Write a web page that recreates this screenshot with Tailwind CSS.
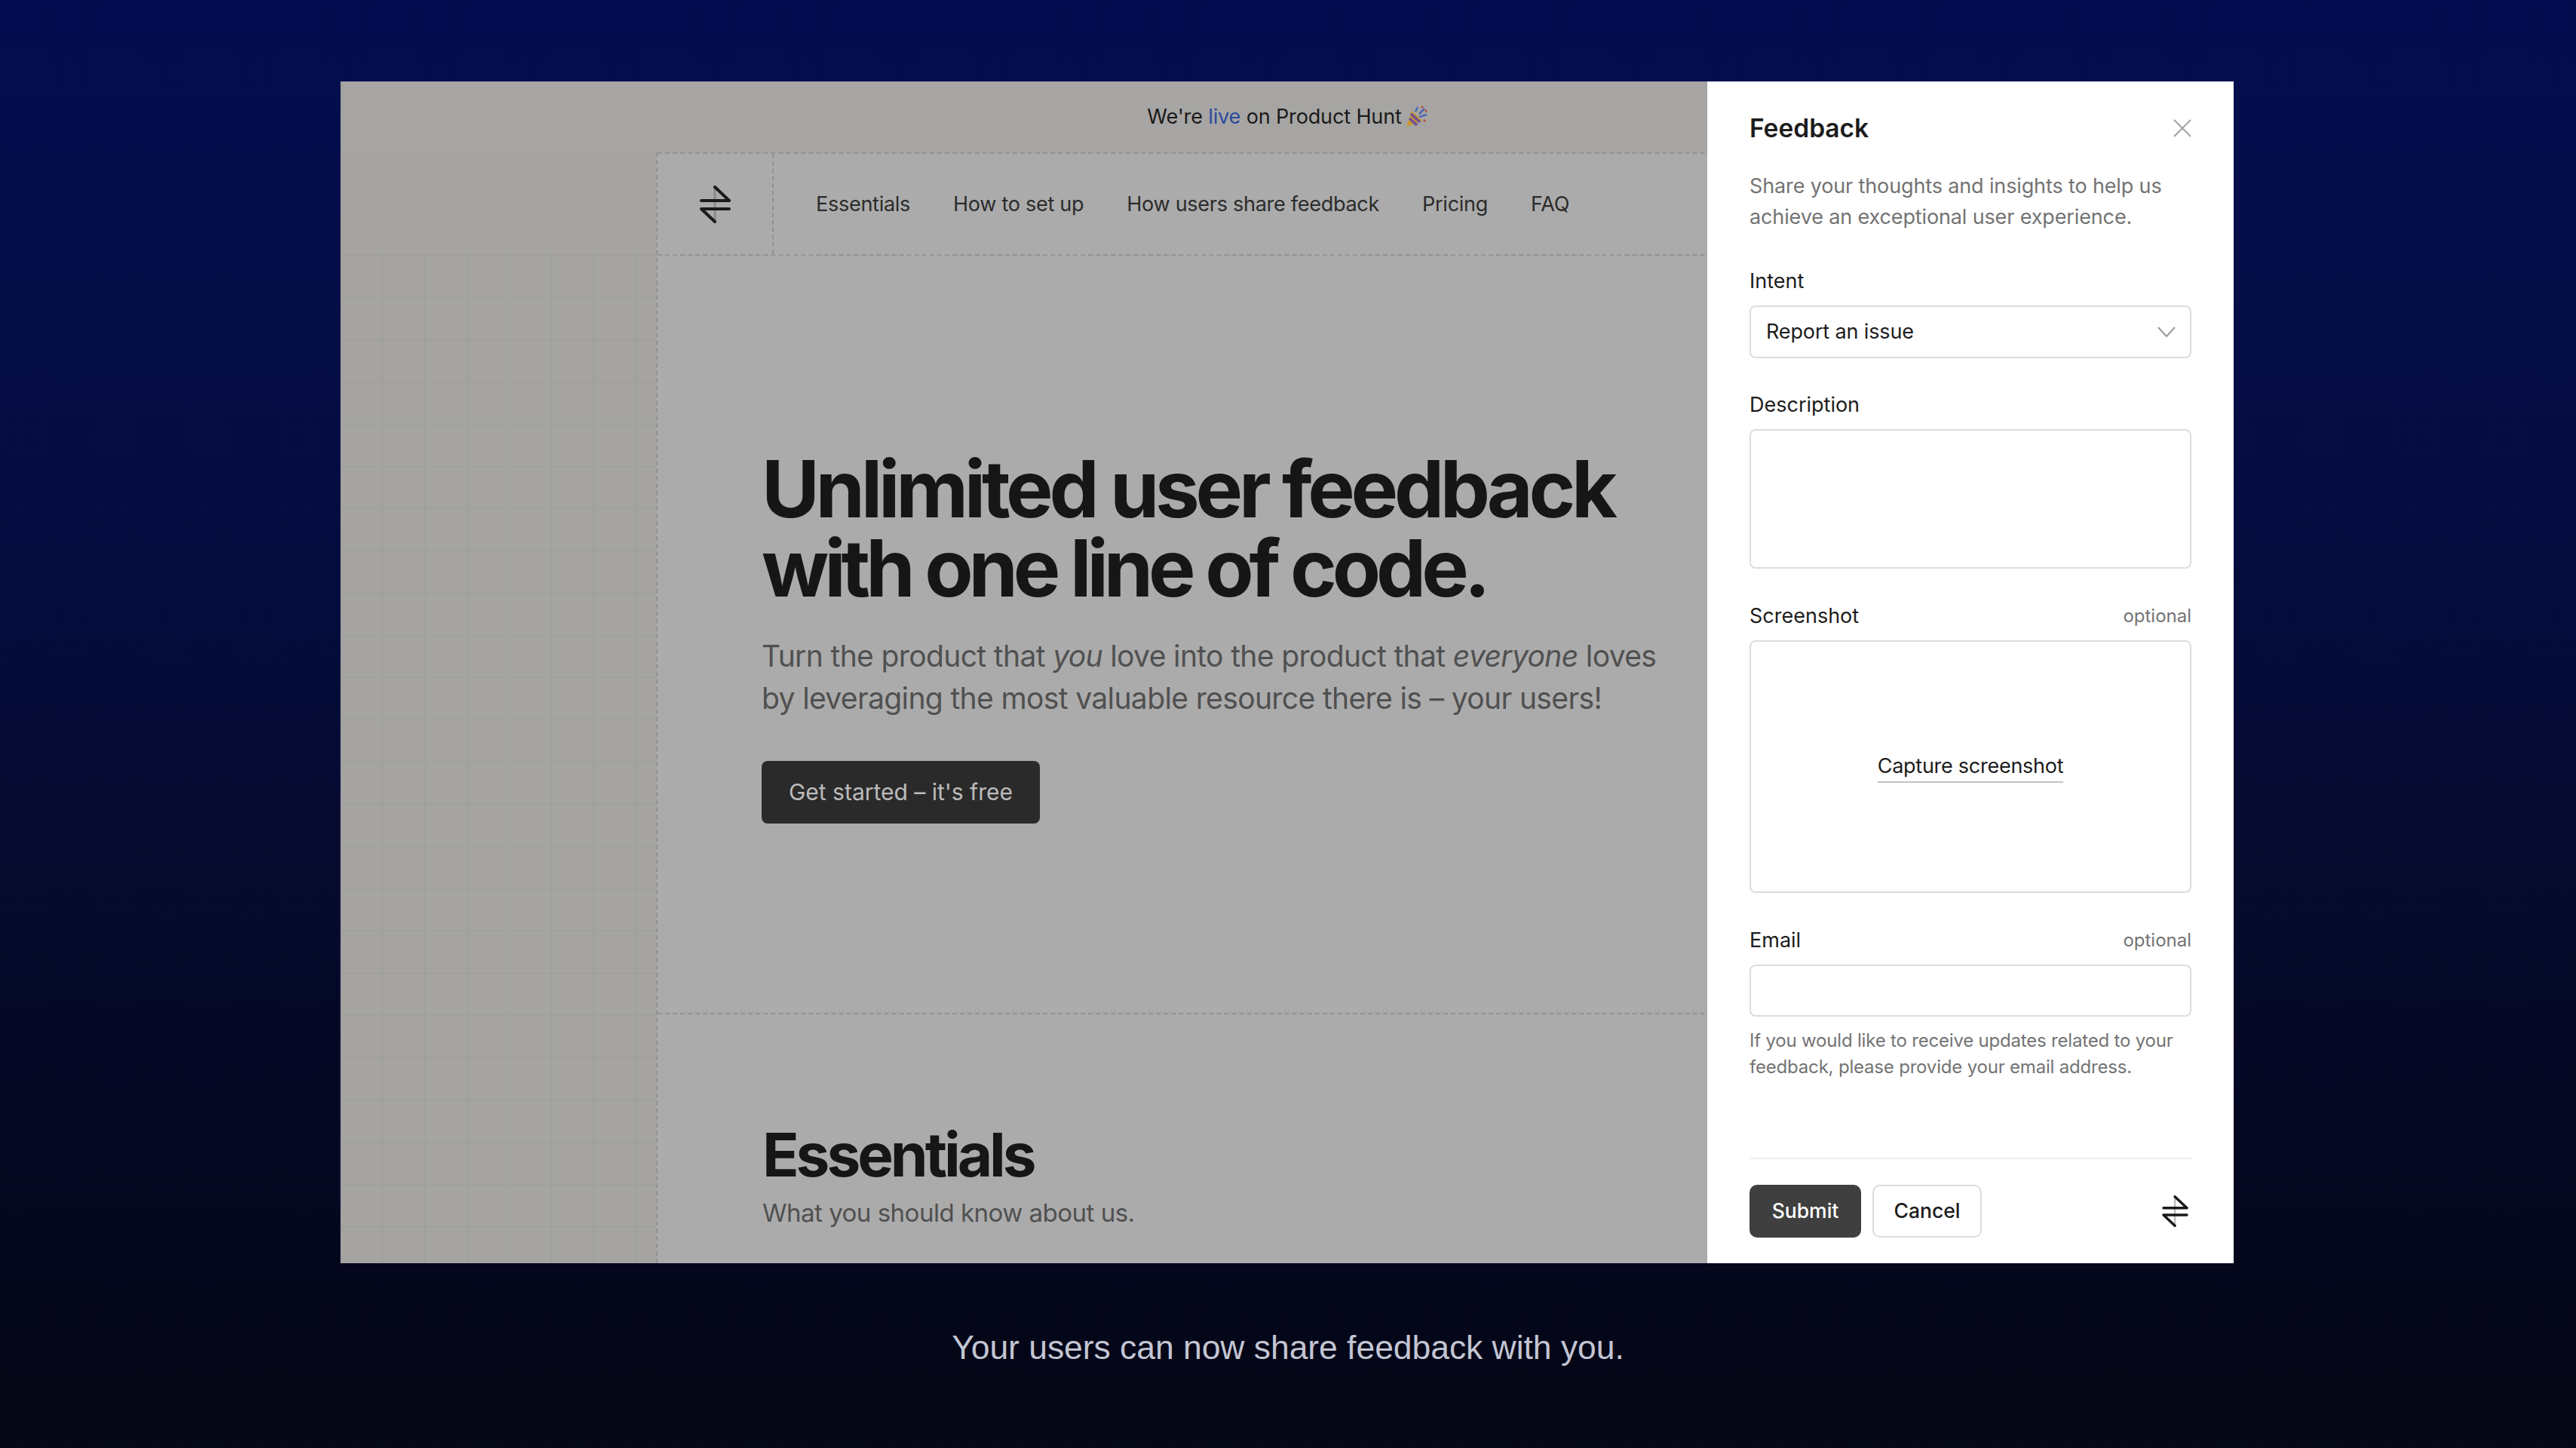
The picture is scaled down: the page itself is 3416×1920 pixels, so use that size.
<!DOCTYPE html>
<html lang="en">
<head>
    <meta charset="UTF-8">
    <meta name="viewport" content="width=device-width, initial-scale=1.0">
    <title>Feedback widget</title>
    <script src="https://cdn.jsdelivr.net/npm/@tailwindcss/browser@4"></script>
</head>
<body class="h-[1920px] overflow-hidden bg-[linear-gradient(180deg,#040d50_0%,#050e4a_15%,#040c3e_40%,#060a2e_60%,#040824_75%,#04061a_90%,#050815_100%)] font-['Inter',sans-serif]">
    <div class="pt-[108px]">
        <div class="relative ml-[452px] h-[1567px] w-[2510px] overflow-hidden bg-[#ababab] shadow-[-1px_0_0_#4d4f66]">
            <!-- dimmed page -->
            <div class="flex h-[94px] items-center justify-center gap-[4px] bg-[#a6a5a3] text-[27px] tracking-[-0.005em] text-[#1a1a1a]">
                <span>We're <span class="text-[#2a4a9e]">live</span> on Product Hunt</span>
                <svg class="h-[30px] w-[30px]" viewBox="0 0 30 30">
                    <path d="M2 28 L9 7 L23 20 Z" fill="#c9982c"/>
                    <path d="M6 17 L16 26 M8 11 L20 22" stroke="#6f4f9a" stroke-width="3.5"/>
                    <path d="M14 8 L17 2 M19 11 L26 4 M19 15 L29 12" stroke="#4f68b5" stroke-width="2.5"/>
                    <path d="M22 3 L24 1 M27 8 L29 6 M25 19 L27 21" stroke="#b5473f" stroke-width="2.5"/>
                </svg>
            </div>
            <div class="flex h-[1473px]">
                <div class="flex w-[418px] flex-col bg-[#a5a4a2]">
                    <div class="h-[136px]"></div>
                    <div class="flex-1 bg-[linear-gradient(to_right,#9d9d9b_1px,transparent_1px),linear-gradient(to_bottom,#9d9d9b_1px,transparent_1px)] bg-size-[56px_56px] bg-position-[-1px_0]"></div>
                </div>
                <div class="flex-1 border-l-2 border-dashed border-[#939393]">
                    <nav class="flex h-[137px] items-center border-y-2 border-dashed border-[#939393]">
                        <div class="flex h-full w-[154px] items-center justify-center border-r-2 border-dashed border-[#939393]">
                            <svg class="h-[50px] w-[41px]" viewBox="0 0 41 50" fill="none" stroke-linecap="round" stroke-linejoin="round">
                                <path d="M20 2 V48" stroke="#8a8a8a" stroke-width="3"/>
                                <path d="M20 2 L39 20 H2 M2 31 H39 M2 31 L20 48" stroke="#1a1a1a" stroke-width="4"/>
                            </svg>
                        </div>
                        <div class="ml-[56px] mt-[1px] flex gap-[57px] text-[27px] tracking-[-0.01em] text-[#2b2b2b]">
                            <a>Essentials</a>
                            <a>How to set up</a>
                            <a>How users share feedback</a>
                            <a>Pricing</a>
                            <a>FAQ</a>
                        </div>
                    </nav>
                    <section class="h-[1006px] border-b-2 border-dashed border-[#939393] pl-[138px] pt-[256px]">
                        <h1 class="text-[105px] leading-[105px] font-bold tracking-[-0.05em] text-[#161616]">Unlimited user feedback<br><span class="tracking-[-0.058em]">with one line of code.</span></h1>
                        <p class="mt-[37px] text-[39px] leading-[56px] tracking-[-0.016em] text-[#505050]">Turn the product that <em>you</em> love into the product that <em>everyone</em> loves<br>by leveraging the most valuable resource there is – your users!</p>
                        <button class="mt-[55px] flex h-[83px] w-[369px] items-center justify-center rounded-[8px] bg-[#2a2a2a] text-[30px] text-[#bcbcbc]">Get started – it's free</button>
                    </section>
                    <section class="pl-[139px] pt-[136px]">
                        <h2 class="text-[80px] leading-[100px] font-bold tracking-[-0.05em] text-[#161616]">Essentials</h2>
                        <p class="mt-[2px] text-[33px] leading-[50px] tracking-[-0.015em] text-[#505050]">What you should know about us.</p>
                    </section>
                </div>
            </div>

            <!-- feedback panel -->
            <aside class="absolute inset-y-0 right-0 flex w-[698px] flex-col bg-white px-[56px] text-[#1c1c1c]">
                <div class="flex h-[124px] items-center justify-between">
                    <h3 class="text-[33.5px] font-semibold">Feedback</h3>
                    <svg class="h-[24px] w-[24px]" viewBox="0 0 24 24" fill="none" stroke="#a3a3a3" stroke-width="2">
                        <path d="M1 1 L23 23 M23 1 L1 23"/>
                    </svg>
                </div>
                <p class="-mt-[6px] text-[27px] leading-[41px] tracking-[-0.005em] text-[#737373]">Share your thoughts and insights to help us achieve an exceptional user experience.</p>
                <label class="mt-[44px] block text-[27px] leading-[41px]">Intent</label>
                <div class="relative mt-[12px]">
                    <select class="h-[70px] w-full appearance-none rounded-[8px] border-2 border-[#dcdcdc] pl-[20px] text-[27px] tracking-[-0.005em]">
                        <option>Report an issue</option>
                    </select>
                    <svg class="absolute right-[20px] top-[27px] h-[16px] w-[26px]" viewBox="0 0 26 16" fill="none" stroke="#9a9a9a" stroke-width="2">
                        <path d="M2 2 L13 14 L24 2"/>
                    </svg>
                </div>
                <label class="mt-[41px] block text-[27px] leading-[41px]">Description</label>
                <textarea class="mt-[12px] h-[185px] w-full resize-none rounded-[8px] border-2 border-[#dcdcdc]"></textarea>
                <div class="mt-[42px] flex items-center justify-between">
                    <label class="text-[27px] leading-[41px]">Screenshot</label>
                    <span class="text-[24px] text-[#737373]">optional</span>
                </div>
                <div class="mt-[12px] flex h-[335px] items-center justify-center rounded-[8px] border-2 border-[#dcdcdc]">
                    <span class="mt-[2px] border-b-2 border-[#c4c4c4] pb-[2px] text-[27px] leading-[36px] tracking-[-0.01em]">Capture screenshot</span>
                </div>
                <div class="mt-[42px] flex items-center justify-between">
                    <label class="text-[27px] leading-[41px]">Email</label>
                    <span class="text-[24px] text-[#737373]">optional</span>
                </div>
                <input type="text" class="mt-[12px] h-[69px] w-full rounded-[8px] border-2 border-[#dcdcdc]">
                <p class="mt-[14px] text-[24px] leading-[35px] tracking-[-0.008em] text-[#737373]">If you would like to receive updates related to your feedback, please provide your email address.</p>
                <div class="mt-auto mb-[34px] flex h-[106px] items-end justify-between border-t-2 border-[#eeeeee]">
                    <div class="flex gap-[15px]">
                        <button class="h-[70px] w-[148px] rounded-[10px] bg-[#3f3f3f] text-[26.5px] font-medium text-white">Submit</button>
                        <button class="h-[70px] w-[145px] rounded-[10px] border-2 border-[#dcdcdc] text-[26.5px] font-medium">Cancel</button>
                    </div>
                    <svg class="mb-[14px] mr-[4px] h-[42px] w-[35px]" viewBox="0 0 41 50" fill="none" stroke-linecap="round" stroke-linejoin="round">
                        <path d="M20 2 V48" stroke="#bdbdbd" stroke-width="3"/>
                        <path d="M20 2 L39 20 H2 M2 31 H39 M2 31 L20 48" stroke="#1a1a1a" stroke-width="4"/>
                    </svg>
                </div>
            </aside>
        </div>
        <p class="mt-[85px] text-center font-['Liberation_Sans',sans-serif] text-[44.4px] leading-[54px] text-[#c3c5d2]">Your users can now share feedback with you.</p>
    </div>
</body>
</html>
